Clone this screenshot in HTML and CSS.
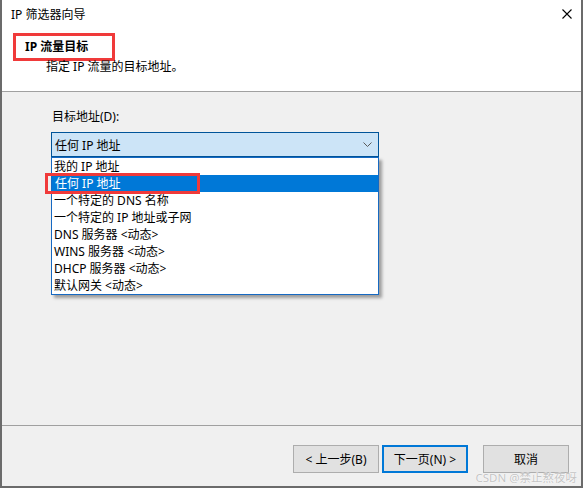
FILE: index.html
```html
<!DOCTYPE html>
<html>
<head>
    <title>IP 筛选器向导</title>
    <link rel="stylesheet" href="styles.css">
</head>
<body>
    <div class="window">
        <div class="header">
            <div class="titlebar">
                <span>IP 筛选器向导</span>
                <svg class="close" width="10" height="10" viewBox="0 0 10 10">
                    <path d="M0.5 0.5 L9.5 9.5 M9.5 0.5 L0.5 9.5" stroke="#000" stroke-width="1.1" fill="none"/>
                </svg>
            </div>
            <div class="step-title">IP 流量目标</div>
            <div class="step-desc">指定 IP 流量的目标地址。</div>
        </div>

        <div class="main">
            <div class="field-label">目标地址(D):</div>
            <div class="combo">
                <span>任何 IP 地址</span>
                <svg width="9" height="5" viewBox="0 0 9 5">
                    <path d="M0.5 0.5 L4.5 4.5 L8.5 0.5" stroke="#5a5a5a" stroke-width="1" fill="none"/>
                </svg>
            </div>
            <ul class="dropdown">
                <li>我的 IP 地址</li>
                <li class="selected">任何 IP 地址</li>
                <li>一个特定的 DNS 名称</li>
                <li>一个特定的 IP 地址或子网</li>
                <li>DNS 服务器 &lt;动态&gt;</li>
                <li>WINS 服务器 &lt;动态&gt;</li>
                <li>DHCP 服务器 &lt;动态&gt;</li>
                <li>默认网关 &lt;动态&gt;</li>
                <div class="mark-item"></div>
            </ul>
        </div>

        <div class="footer">
            <button class="btn back">&lt; 上一步(B)</button>
            <button class="btn next">下一页(N) &gt;</button>
            <button class="btn">取消</button>
        </div>

        <div class="watermark">CSDN @禁止熬夜呀</div>
    </div>
</body>
</html>
```
FILE: styles.css
```css
* {
    box-sizing: border-box;
}
body {
    margin: 0;
    font-family: "Noto Sans", "Noto Sans CJK SC", sans-serif;
    font-size: 12px;
    color: #000;
    background-color: #fff;
}
.window {
    position: relative;
    width: 583px;
    height: 488px;
    border: 2px solid #6b6b6b;
    border-top: none;
    background-color: #f0f0f0;
    display: flex;
    flex-direction: column;
}
.header {
    background-color: #fff;
    height: 92px;
    border-bottom: 1px solid #a0a0a0;
}
.titlebar {
    height: 28px;
    display: flex;
    align-items: center;
    justify-content: space-between;
    padding: 0 9px 0 9px;
}
.close {
    display: block;
}
.step-title {
    display: inline-block;
    margin: 5px 0 0 11px;
    width: 102px;
    height: 28px;
    padding: 0 9px;
    border: 3px solid #f03a3a;
    font-weight: bold;
    line-height: 22px;
}
.step-desc {
    margin: -1px 0 0 44px;
    line-height: 14px;
}
.main {
    flex: 1;
    padding: 17px 0 0 49px;
}
.field-label {
    padding-left: 1px;
    line-height: 16px;
    margin-bottom: 7px;
}
.combo {
    width: 328px;
    height: 25px;
    border: 1px solid #005499;
    background-color: #cce4f7;
    display: flex;
    align-items: center;
    justify-content: space-between;
    padding: 0 6px 0 3px;
}
.combo svg {
    display: block;
}
.dropdown {
    position: relative;
    list-style: none;
    margin: 0;
    padding: 0;
    width: 328px;
    border: 1px solid #1669c2;
    background-color: #fff;
    box-shadow: 3px 3px 3px rgba(0, 0, 0, 0.35);
}
.dropdown li {
    height: 17px;
    line-height: 17px;
    padding-left: 2px;
    white-space: nowrap;
}
.dropdown li.selected {
    background-color: #0078d7;
    color: #fff;
    padding-left: 3px;
}
.mark-item {
    position: absolute;
    left: -7px;
    top: 15px;
    width: 155px;
    height: 21px;
    border: 3px solid #f03a3a;
}
.footer {
    height: 61px;
    border-top: 1px solid #a0a0a0;
    padding: 19px 12px 0 0;
    display: flex;
    justify-content: flex-end;
    align-items: flex-start;
}
.btn {
    width: 86px;
    height: 28px;
    background-color: #e1e1e1;
    border: 1px solid #adadad;
    font-family: inherit;
    font-size: 12px;
    color: #000;
    padding: 0;
}
.btn.back {
    margin-right: 3px;
}
.btn.next {
    margin-right: 15px;
    border: 2px solid #0078d7;
}
.watermark {
    position: absolute;
    right: 4px;
    bottom: 1px;
    font-size: 11.5px;
    line-height: 14px;
    color: #c4c4c4;
    text-shadow: 0 0 1px #fff, 0 0 1px #fff;
}
```
